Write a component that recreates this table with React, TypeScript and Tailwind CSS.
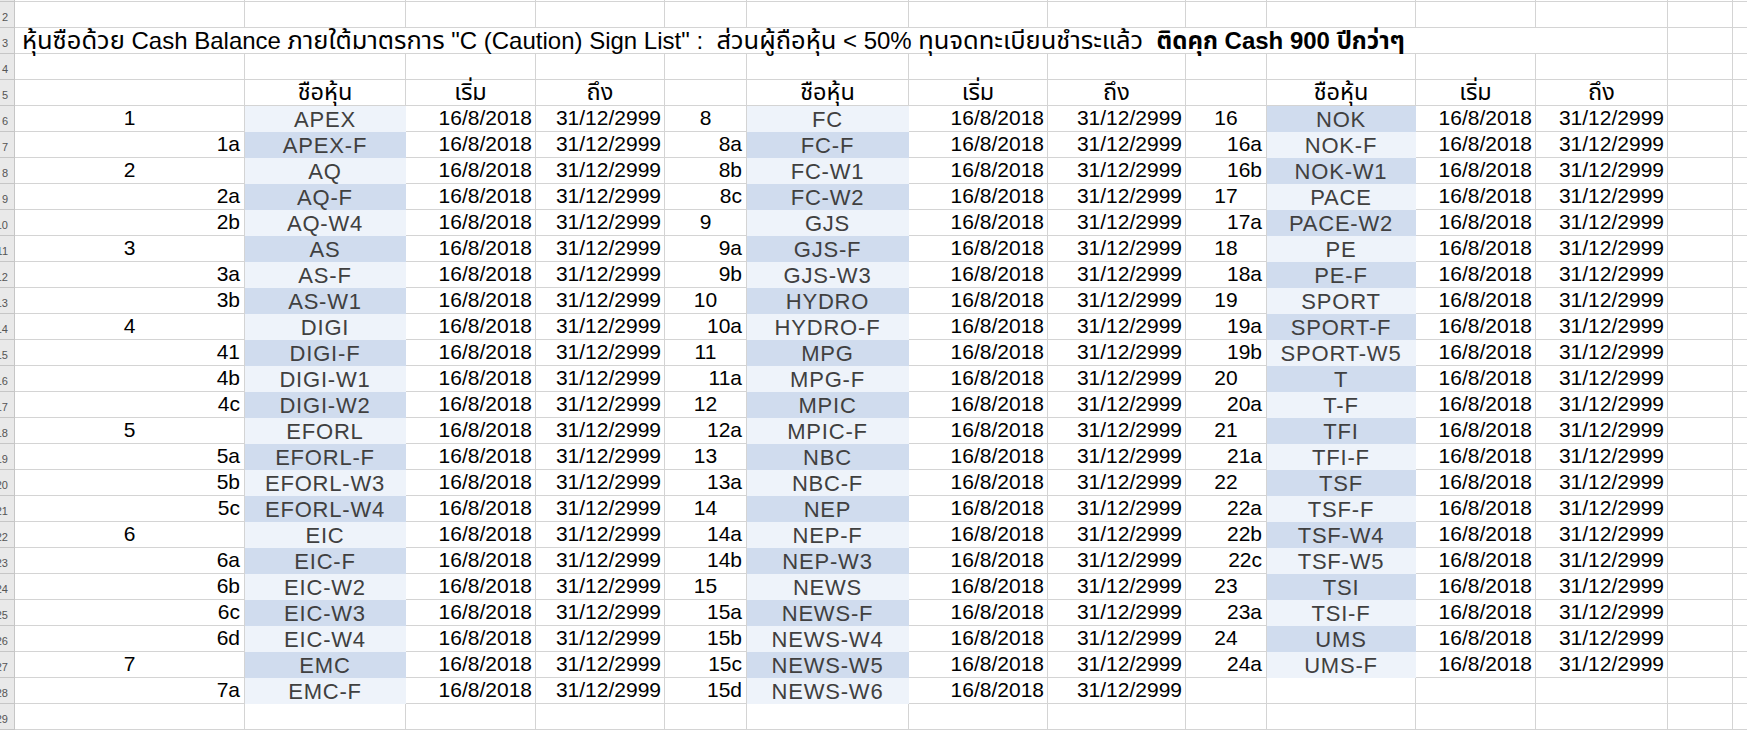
import React from "react";

// column widths (A..N), row header is 15px
const COLW = [
  "w-[230px]",
  "w-[161px]",
  "w-[130px]",
  "w-[129px]",
  "w-[82px]",
  "w-[162px]",
  "w-[139px]",
  "w-[138px]",
  "w-[81px]",
  "w-[149px]",
  "w-[120px]",
  "w-[132px]",
  "w-[65px]",
  "w-[120px]",
];

const LIGHT = "bg-[#eef3fa] border-[#eef3fa]";
const DARK = "bg-[#d0dcee] border-[#d0dcee]";

type Align = "c" | "r";
type C = { t?: string; a?: Align; kind?: "num" | "name" | "date" | "head"; bg?: string };

const colA = ["1", "1a", "2", "2a", "2b", "3", "3a", "3b", "4", "41", "4b", "4c", "5", "5a", "5b", "5c", "6", "6a", "6b", "6c", "6d", "7", "7a"];
const colB = ["APEX", "APEX-F", "AQ", "AQ-F", "AQ-W4", "AS", "AS-F", "AS-W1", "DIGI", "DIGI-F", "DIGI-W1", "DIGI-W2", "EFORL", "EFORL-F", "EFORL-W3", "EFORL-W4", "EIC", "EIC-F", "EIC-W2", "EIC-W3", "EIC-W4", "EMC", "EMC-F"];
const colE = ["8", "8a", "8b", "8c", "9", "9a", "9b", "10", "10a", "11", "11a", "12", "12a", "13", "13a", "14", "14a", "14b", "15", "15a", "15b", "15c", "15d"];
const colF = ["FC", "FC-F", "FC-W1", "FC-W2", "GJS", "GJS-F", "GJS-W3", "HYDRO", "HYDRO-F", "MPG", "MPG-F", "MPIC", "MPIC-F", "NBC", "NBC-F", "NEP", "NEP-F", "NEP-W3", "NEWS", "NEWS-F", "NEWS-W4", "NEWS-W5", "NEWS-W6"];
const colI = ["16", "16a", "16b", "17", "17a", "18", "18a", "19", "19a", "19b", "20", "20a", "21", "21a", "22", "22a", "22b", "22c", "23", "23a", "24", "24a"];
const colJ = ["NOK", "NOK-F", "NOK-W1", "PACE", "PACE-W2", "PE", "PE-F", "SPORT", "SPORT-F", "SPORT-W5", "T", "T-F", "TFI", "TFI-F", "TSF", "TSF-F", "TSF-W4", "TSF-W5", "TSI", "TSI-F", "UMS", "UMS-F"];

const num = (t?: string): C => (t ? { t, kind: "num", a: /^\d+$/.test(t) && t !== "41" ? "c" : "r" } : {});
const date = (t: string): C => ({ t, kind: "date", a: "r" });
const name = (t: string, bg: string): C => ({ t, kind: "name", a: "c", bg });

function buildRow(r: number): C[] {
  const i = r - 6;
  if (r === 5) {
    const h = (t: string): C => ({ t, kind: "head", a: "c" });
    return [{}, h("ชือหุ้น"), h("เริ่ม"), h("ถึง"), {}, h("ชือหุ้น"), h("เริ่ม"), h("ถึง"), {}, h("ชือหุ้น"), h("เริ่ม"), h("ถึง"), {}, {}];
  }
  if (r < 6 || r > 28) return Array.from({ length: 14 }, () => ({}));
  const oddDark = r % 2 === 1;
  const cells: C[] = [
    num(colA[i]),
    name(colB[i], oddDark ? DARK : LIGHT),
    date("16/8/2018"),
    date("31/12/2999"),
    num(colE[i]),
    name(colF[i], oddDark ? DARK : LIGHT),
    date("16/8/2018"),
    date("31/12/2999"),
  ];
  if (r <= 27) {
    cells.push(num(colI[i]), name(colJ[i], oddDark ? LIGHT : DARK), date("16/8/2018"), date("31/12/2999"));
  } else {
    cells.push({}, {}, {}, {});
  }
  cells.push({}, {});
  return cells;
}

function Cell({ c, w }: { c: C; w: string }) {
  const border = c.bg ?? "border-[#d4d4d4]";
  let cls = "text-[21px] leading-[24px] text-black";
  if (c.kind === "name") cls = "text-center text-[22px] tracking-[0.8px] leading-[25px] pt-[1px] text-[#404040]";
  else if (c.kind === "head") cls = "text-center text-[23.5px] leading-[25px] text-black";
  else if (c.a === "c") cls = "text-center text-[21px] leading-[24px] text-black";
  else if (c.kind === "num") cls = "text-right pr-[4px] text-[21px] leading-[24px] text-black";
  else if (c.kind === "date") cls = "text-right pr-[3px] text-[21px] leading-[24px] text-black";
  return (
    <div className={`${w} h-[26px] shrink-0 overflow-visible whitespace-nowrap border-r border-b ${border} ${cls}`}>
      {c.t}
    </div>
  );
}

function RowHead({ n }: { n: number }) {
  return (
    <div className="w-[15px] h-[26px] shrink-0 overflow-hidden border-r border-b border-[#c6c6c6] bg-[#e9e9e9] pr-[6px] pt-[3px] text-[11px] leading-[25px] text-[#555]">
      <span className="float-right whitespace-nowrap">{n}</span>
    </div>
  );
}

const Th = ({ children }: { children: string }) => <span className="text-[25.5px]">{children}</span>;
const ThB = ({ children }: { children: string }) => <span className="text-[24px]">{children}</span>;

export default function App() {
  const rows = Array.from({ length: 28 }, (_, k) => k + 2);
  return (
    <div className="h-[733px] w-[1747px] overflow-hidden bg-white font-['Liberation_Sans','Noto_Sans_Thai','Tahoma','DejaVu_Sans',sans-serif]">
      {/* row 1: only its bottom gridline shows */}
      <div className="flex h-[2px]">
        <div className="w-[15px] shrink-0 border-r border-b border-[#c6c6c6] bg-[#e9e9e9]" />
        {COLW.map((w, k) => (
          <div key={k} className={`${w} shrink-0 border-r border-b border-[#d4d4d4]`} />
        ))}
      </div>
      {rows.map((r) =>
        r === 3 ? (
          <div key={r} className="flex">
            <RowHead n={r} />
            <div className="w-[1653px] h-[26px] shrink-0 border-r border-b border-[#d4d4d4] whitespace-pre pl-[7px] text-[24px] leading-[25px] text-black">
              <Th>หุ้นซือด้วย</Th>
              {" Cash Balance "}
              <Th>ภายใต้มาตรการ</Th>
              {' "C (Caution) Sign List" :  '}
              <Th>ส่วนผู้ถือหุ้น</Th>
              {" < 50% "}
              <Th>ทุนจดทะเบียนชำระแล้ว</Th>
              {"  "}
              <span className="font-bold">
                <ThB>ติดคุก</ThB>
                {" Cash 900 "}
                <ThB>ปีกว่าๆ</ThB>
              </span>
            </div>
            <Cell c={{}} w={COLW[12]} />
            <Cell c={{}} w={COLW[13]} />
          </div>
        ) : (
          <div key={r} className="flex">
            <RowHead n={r} />
            {buildRow(r).map((c, k) => (
              <Cell key={k} c={c} w={COLW[k]} />
            ))}
          </div>
        )
      )}
    </div>
  );
}
